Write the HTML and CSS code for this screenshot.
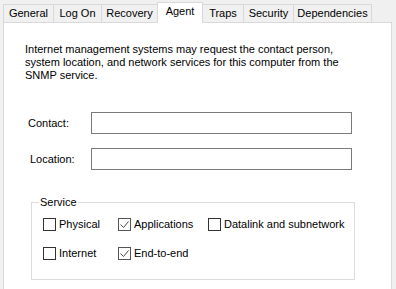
FILE: index.html
```html
<!DOCTYPE html>
<html>
<head>
<meta charset="utf-8">
<link rel="stylesheet" href="styles.css">
</head>
<body>
<div class="tabs">
  <div class="tab w-general">General</div>
  <div class="tab w-logon">Log On</div>
  <div class="tab w-recovery">Recovery</div>
  <div class="tab active w-agent">Agent</div>
  <div class="tab w-traps">Traps</div>
  <div class="tab w-security">Security</div>
  <div class="tab w-deps">Dependencies</div>
</div>
<div class="panel">
  <p class="intro">Internet management systems may request the contact person,<br>system location, and network services for this computer from the<br>SNMP service.</p>
  <div class="form">
    <label class="lbl lbl-contact">Contact:</label>
    <div class="field"></div>
    <label class="lbl lbl-location">Location:</label>
    <div class="field"></div>
  </div>
  <fieldset class="group">
    <legend>Service</legend>
    <div class="checks">
      <div class="check"><span class="box"></span>Physical</div>
      <div class="check"><span class="box checked"><svg width="11" height="11" viewBox="0 0 11 11"><path d="M1.5 5.5 L4.5 8.5 L9.5 2.5" fill="none" stroke="#4a4a4a" stroke-width="1"/></svg></span>Applications</div>
      <div class="check"><span class="box"></span>Datalink and subnetwork</div>
      <div class="check"><span class="box"></span>Internet</div>
      <div class="check"><span class="box checked"><svg width="11" height="11" viewBox="0 0 11 11"><path d="M1.5 5.5 L4.5 8.5 L9.5 2.5" fill="none" stroke="#4a4a4a" stroke-width="1"/></svg></span>End-to-end</div>
    </div>
  </fieldset>
</div>
</body>
</html>
```

FILE: styles.css
```css
html, body {
  margin: 0;
  padding: 0;
  background: #f0f0f0;
  height: 100%;
  overflow: hidden;
}
body {
  font-family: "Liberation Sans", Arial, sans-serif;
  font-size: 11px;
  line-height: 13px;
  color: #000;
}
.tabs {
  display: flex;
  align-items: flex-end;
  height: 23px;
  padding-left: 3px;
  box-sizing: border-box;
}
.tab {
  box-sizing: border-box;
  height: 18px;
  margin-bottom: 1px;
  border: 1px solid #d9d9d9;
  border-bottom: none;
  border-right: none;
  background: #f0f0f0;
  text-align: center;
  padding-top: 2px;
}
.tab.w-deps { border-right: 1px solid #d9d9d9; }
.tab.active {
  position: relative;
  z-index: 2;
  height: 21px;
  margin-bottom: 0;
  background: #fff;
  border-right: 1px solid #d9d9d9;
  padding-top: 2px;
}
.w-traps { border-left: none; }
.w-general { width: 50px; }
.w-logon { width: 48px; }
.w-recovery { width: 56px; }
.w-agent { width: 46px; }
.w-traps { width: 40px; }
.w-security { width: 50px; }
.w-deps { width: 79px; }

.panel {
  box-sizing: border-box;
  margin: -1px 4px 0 3px;
  height: 280px;
  background: #fff;
  border: 1px solid #d9d9d9;
  padding: 20px 0 0 21px;
}
.intro {
  margin: 0;
  white-space: nowrap;
}
.form {
  display: grid;
  grid-template-columns: 66px 261px;
  row-gap: 14px;
  align-items: center;
  margin-top: 30px;
}
.lbl-contact { padding-left: 3px; }
.lbl-location { padding-left: 5px; }
.field {
  height: 22px;
  box-sizing: border-box;
  border: 1px solid #7a7a7a;
  background: #fff;
}
.group {
  margin: 26px 0 0 6px;
  width: 324px;
  box-sizing: border-box;
  height: 84px;
  border: 1px solid #dcdcdc;
  padding: 9px 0 0 11px;
}
.group legend {
  padding: 0 1px;
  margin-left: -4px;
}
.checks {
  display: grid;
  grid-template-columns: 75px 90px auto;
  row-gap: 16px;
}
.check {
  display: flex;
  align-items: center;
  height: 13px;
  white-space: nowrap;
}
.box {
  box-sizing: border-box;
  width: 13px;
  height: 13px;
  border: 1px solid #333;
  margin-right: 3px;
  background: #fff;
  display: flex;
  flex: none;
}
.box.checked { border-color: #555; }
.box svg { display: block; }
```
